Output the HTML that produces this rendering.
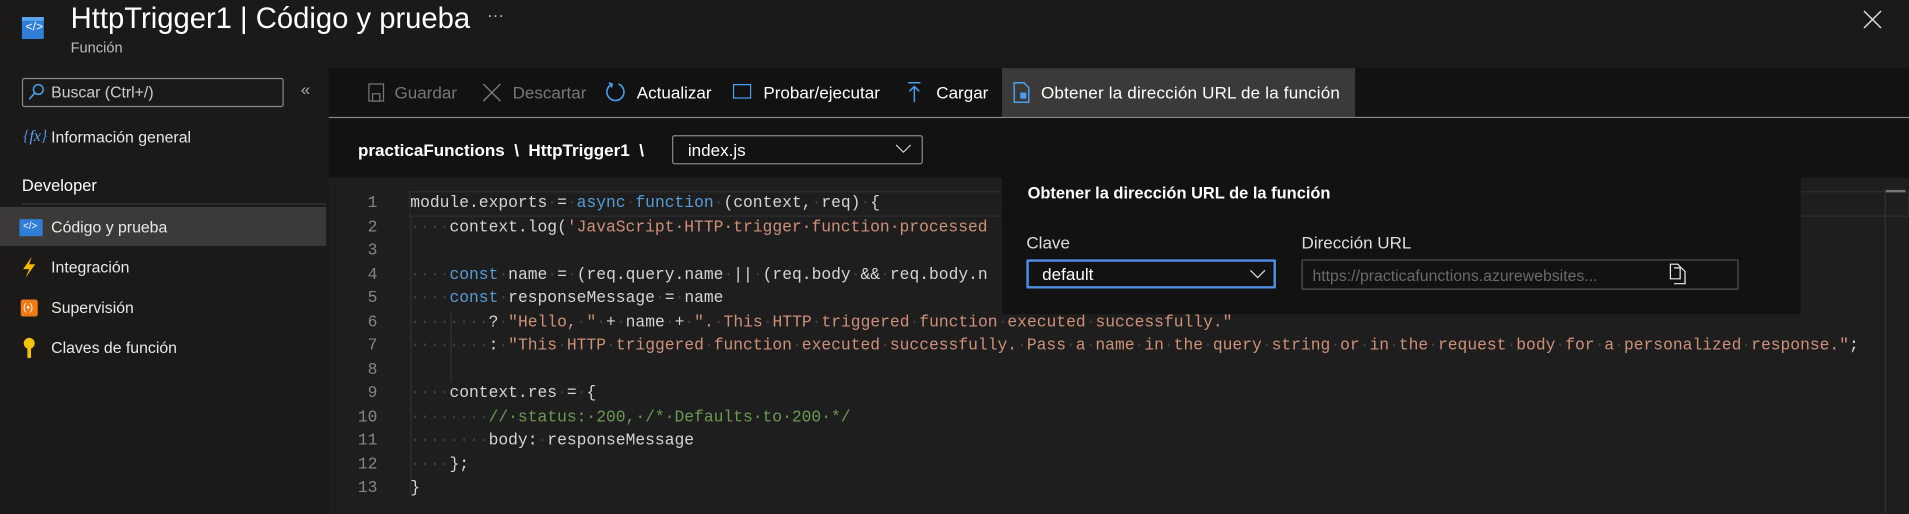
<!DOCTYPE html>
<html><head><meta charset="utf-8"><style>
*{margin:0;padding:0;box-sizing:border-box}
html,body{width:1909px;height:513px;overflow:hidden;background:#1b1a19}
#w{position:absolute;left:0;top:0;width:1568px;height:422px;transform:scale(1.2175);transform-origin:0 0;font-family:"Liberation Sans",sans-serif;color:#fff;background:#1b1a19}
.a{position:absolute;white-space:nowrap}
.sb{font-size:13px;color:#e8e8e8}
.tb{font-size:14px;color:#fff;top:68px}
.code{position:absolute;left:270px;top:146px;width:1298px;height:276px;background:#1e1e1e;font-family:"Liberation Mono",monospace;font-size:13.4px;line-height:19.5px}
.ln{position:absolute;left:0;width:40px;text-align:right;color:#858585}
.cl{position:absolute;left:67px;color:#d4d4d4;white-space:pre}
.k{color:#569cd6}.s{color:#ce9178}.c{color:#6a9955}.d{color:#404040}
</style></head><body><div id="w">
<div class="a" style="left:18px;top:14px;width:18px;height:18px;background:#2f7fd8;border-top:3px solid #5aa6ef"></div>
<div class="a" style="left:21px;top:17px;font-size:10px;color:#fff">&lt;/&gt;</div>
<div class="a" style="left:58px;top:2px;font-size:24px;color:#fff">HttpTrigger1 | Código y prueba</div>
<div class="a" style="left:400px;top:4px;font-size:14px;color:#bbb">···</div>
<div class="a" style="left:58px;top:32px;font-size:12px;color:#bbb">Función</div>
<svg class="a" style="left:1530px;top:8px" width="16" height="16"><path d="M1 1L15 15M15 1L1 15" stroke="#ddd" stroke-width="1.2"/></svg>
<div class="a" style="left:0;top:56px;width:270px;height:366px;background:#1b1a19"></div>
<div class="a" style="left:18px;top:64px;width:215px;height:24px;border:1px solid #8a8886;border-radius:2px"></div>
<svg class="a" style="left:23px;top:68px" width="14" height="15"><circle cx="8.5" cy="5.5" r="4" stroke="#4aa0f0" fill="none" stroke-width="1.2"/><path d="M5.5 8.5L1 13.5" stroke="#4aa0f0" stroke-width="1.3"/></svg>
<div class="a sb" style="left:42px;top:68px;color:#ccc">Buscar (Ctrl+/)</div>
<div class="a" style="left:247px;top:65px;font-size:14px;color:#aaa">«</div>
<div class="a" style="left:19px;top:104px;font-size:13px;color:#4a8fd8;font-style:italic;font-family:'Liberation Serif',serif">{<span style="color:#5aa6ef">fx</span>}</div>
<div class="a sb" style="left:42px;top:105px">Información general</div>
<div class="a" style="left:18px;top:145px;font-size:13.5px;color:#fff">Developer</div>
<div class="a" style="left:18px;top:167px;width:250px;height:1px;background:#3b3a39"></div>
<div class="a" style="left:0;top:170px;width:268px;height:32px;background:#3b3a39"></div>
<div class="a" style="left:16px;top:180px;width:19px;height:14px;background:#2f7fd8"></div>
<div class="a" style="left:19px;top:181px;font-size:8px;color:#fff">&lt;/&gt;</div>
<div class="a sb" style="left:42px;top:179px">Código y prueba</div>
<svg class="a" style="left:17px;top:211px" width="14" height="18"><path d="M9 0L2 10H7L4 17L12 6H7Z" fill="#f5b800"/></svg>
<div class="a sb" style="left:42px;top:212px">Integración</div>
<div class="a" style="left:17px;top:246px;width:14px;height:14px;background:#f07b16;border-radius:2px"></div>
<div class="a" style="left:19px;top:248px;font-size:8px;color:#fff">(•)</div>
<div class="a sb" style="left:42px;top:245px">Supervisión</div>
<svg class="a" style="left:18px;top:277px" width="12" height="18"><circle cx="6" cy="5" r="4.5" fill="#f5c400"/><rect x="4.5" y="8" width="3" height="9" fill="#f5c400"/></svg>
<div class="a sb" style="left:42px;top:278px">Claves de función</div>
<div class="a" style="left:270px;top:56px;width:1298px;height:90px;background:#121212"></div>
<div class="a" style="left:823px;top:56px;width:290px;height:40px;background:#3b3a39"></div>
<div class="a" style="left:270px;top:96px;width:1298px;height:1px;background:#888"></div>
<svg class="a" style="left:302px;top:68px" width="14" height="16"><rect x="1" y="1" width="12" height="14" stroke="#777" fill="none"/><rect x="4" y="9" width="6" height="6" stroke="#777" fill="none"/></svg>
<div class="a tb" style="left:324px;color:#777">Guardar</div>
<svg class="a" style="left:396px;top:68px" width="16" height="16"><path d="M1 1L15 15M15 1L1 15" stroke="#777" stroke-width="1.2"/></svg>
<div class="a tb" style="left:421px;color:#777">Descartar</div>
<svg class="a" style="left:497px;top:67px" width="18" height="18"><path d="M6 2A7 7 0 1 0 11 2" stroke="#4aa0f0" fill="none" stroke-width="1.3"/><path d="M6 2L3 1M6 2L5 5" stroke="#4aa0f0" stroke-width="1.2"/></svg>
<div class="a tb" style="left:523px">Actualizar</div>
<div class="a" style="left:602px;top:69px;width:15px;height:12px;border:1.3px solid #4aa0f0"></div>
<div class="a tb" style="left:627px">Probar/ejecutar</div>
<svg class="a" style="left:745px;top:67px" width="12" height="18"><path d="M1 1H11M6 4V17M2 8L6 4L10 8" stroke="#4aa0f0" fill="none" stroke-width="1.2"/></svg>
<div class="a tb" style="left:769px">Cargar</div>
<svg class="a" style="left:832px;top:67px" width="14" height="18"><path d="M1 1H9L13 5V17H1Z" stroke="#4aa0f0" fill="none" stroke-width="1.2"/><rect x="6" y="9" width="5" height="5" fill="#4aa0f0"/></svg>
<div class="a tb" style="left:855px;letter-spacing:0.15px">Obtener la dirección URL de la función</div>
<div class="a" style="left:294px;top:115px;font-size:14px;font-weight:bold;color:#fff">practicaFunctions&nbsp;&nbsp;\&nbsp;&nbsp;HttpTrigger1&nbsp;&nbsp;\</div>
<div class="a" style="left:552px;top:111px;width:206px;height:24px;border:1px solid #8a8886;border-radius:2px"></div>
<div class="a" style="left:565px;top:115px;font-size:14px">index.js</div>
<svg class="a" style="left:735px;top:118px" width="14" height="9"><path d="M1 1L7 7L13 1" stroke="#ccc" fill="none"/></svg>
<div class="code">
<div class="a" style="left:66px;top:11px;width:1232px;height:21px;border:1px solid #2e2e2e"></div>
<div class="a" style="left:1278px;top:10px;width:17px;height:2px;background:#777"></div>
<div class="a" style="left:1278px;top:10px;width:1px;height:266px;background:#333"></div>
<div class="ln" style="top:12px">1</div><div class="ln" style="top:31.5px">2</div><div class="ln" style="top:51px">3</div><div class="ln" style="top:70.5px">4</div><div class="ln" style="top:90px">5</div><div class="ln" style="top:109.5px">6</div><div class="ln" style="top:129px">7</div><div class="ln" style="top:148.5px">8</div><div class="ln" style="top:168px">9</div><div class="ln" style="top:187.5px">10</div><div class="ln" style="top:207px">11</div><div class="ln" style="top:226.5px">12</div><div class="ln" style="top:246px">13</div>
<div class="cl" style="top:12px">module.exports<span class="d">·</span>=<span class="d">·</span><span class="k">async</span><span class="d">·</span><span class="k">function</span><span class="d">·</span>(context,<span class="d">·</span>req)<span class="d">·</span>{</div>
<div class="cl" style="top:31.5px"><span class="d">····</span>context.log(<span class="s">'JavaScript·HTTP·trigger·function·processed</span></div>
<div class="cl" style="top:70.5px"><span class="d">····</span><span class="k">const</span><span class="d">·</span>name<span class="d">·</span>=<span class="d">·</span>(req.query.name<span class="d">·</span>||<span class="d">·</span>(req.body<span class="d">·</span>&amp;&amp;<span class="d">·</span>req.body.n</div>
<div class="cl" style="top:90px"><span class="d">····</span><span class="k">const</span><span class="d">·</span>responseMessage<span class="d">·</span>=<span class="d">·</span>name</div>
<div class="cl" style="top:109.5px"><span class="d">········</span>?<span class="d">·</span><span class="s">"Hello,<span class="d">·</span>"</span><span class="d">·</span>+<span class="d">·</span>name<span class="d">·</span>+<span class="d">·</span><span class="s">".<span class="d">·</span>This<span class="d">·</span>HTTP<span class="d">·</span>triggered<span class="d">·</span>function<span class="d">·</span>executed<span class="d">·</span>successfully."</span></div>
<div class="cl" style="top:129px"><span class="d">········</span>:<span class="d">·</span><span class="s">"This<span class="d">·</span>HTTP<span class="d">·</span>triggered<span class="d">·</span>function<span class="d">·</span>executed<span class="d">·</span>successfully.<span class="d">·</span>Pass<span class="d">·</span>a<span class="d">·</span>name<span class="d">·</span>in<span class="d">·</span>the<span class="d">·</span>query<span class="d">·</span>string<span class="d">·</span>or<span class="d">·</span>in<span class="d">·</span>the<span class="d">·</span>request<span class="d">·</span>body<span class="d">·</span>for<span class="d">·</span>a<span class="d">·</span>personalized<span class="d">·</span>response."</span>;</div>
<div class="cl" style="top:168px"><span class="d">····</span>context.res<span class="d">·</span>=<span class="d">·</span>{</div>
<div class="cl" style="top:187.5px"><span class="d">········</span><span class="c">//·status:·200,·/*·Defaults·to·200·*/</span></div>
<div class="cl" style="top:207px"><span class="d">········</span>body:<span class="d">·</span>responseMessage</div>
<div class="cl" style="top:226.5px"><span class="d">····</span>};</div>
<div class="cl" style="top:246px">}</div>
<div class="a" style="left:67px;top:32px;width:1px;height:228px;background:#333"></div>
<div class="a" style="left:100px;top:110px;width:1px;height:58px;background:#333"></div>
</div>
<div class="a" style="left:823px;top:97px;width:656px;height:161px;background:#121212"></div>
<div class="a" style="left:844px;top:151px;font-size:13.5px;font-weight:bold">Obtener la dirección URL de la función</div>
<div class="a" style="left:843px;top:191px;font-size:14px;color:#ddd">Clave</div>
<div class="a" style="left:1069px;top:191px;font-size:14px;color:#ddd">Dirección URL</div>
<div class="a" style="left:843px;top:213px;width:205px;height:24px;border:2px solid #4f8fe6;border-radius:1px"></div>
<div class="a" style="left:856px;top:217px;font-size:14px">default</div>
<svg class="a" style="left:1026px;top:221px" width="14" height="9"><path d="M1 1L7 7L13 1" stroke="#ddd" fill="none"/></svg>
<div class="a" style="left:1069px;top:213px;width:359px;height:25px;border:1px solid #555;border-radius:1px"></div>
<div class="a" style="left:1078px;top:219px;font-size:13px;color:#6a6a6a">https://practicafunctions.azurewebsites...</div>
<svg class="a" style="left:1371px;top:216px" width="14" height="18"><path d="M1 1H7L9 3V13H1Z M4 4H10L13 7V17H4" stroke="#eee" fill="#121212" stroke-width="1"/></svg>
</div></body></html>
